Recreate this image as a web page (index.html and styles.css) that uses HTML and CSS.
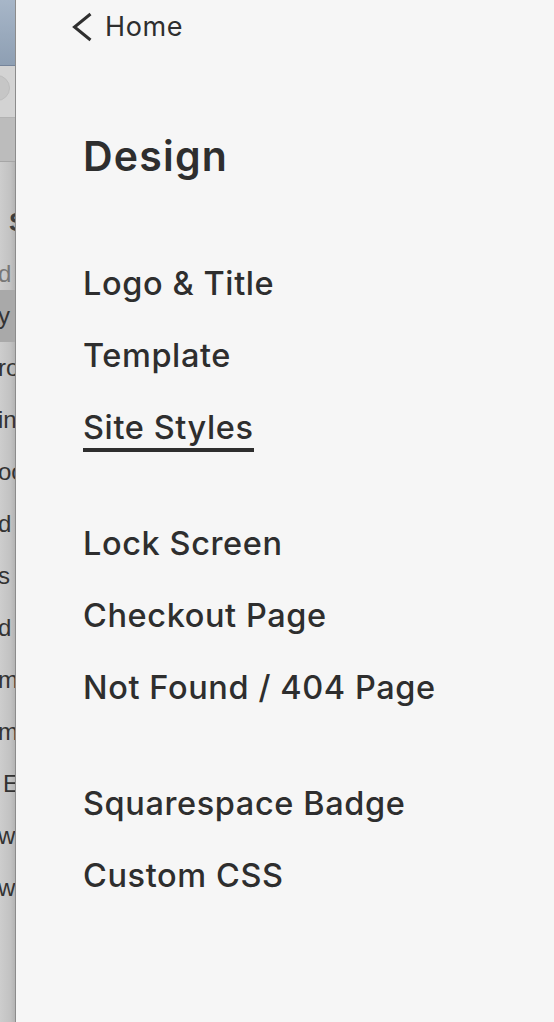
FILE: index.html
```html
<!DOCTYPE html>
<html lang="en">
<head>
<meta charset="utf-8">
<title>Design</title>
<link rel="stylesheet" href="styles.css">
</head>
<body>
<div class="app">
  <aside class="backdrop" aria-hidden="true">
    <div class="titlebar"></div>
    <div class="toolbar"><span class="dot"></span></div>
    <div class="tabs"></div>
    <ul class="bg-list">
      <li class="bg-head"><span class="frag f-s">S</span></li>
      <li class="bg-label"><span class="frag">d</span></li>
      <li class="bg-sel"><span class="frag">y</span></li>
      <li><span class="frag">ro</span></li>
      <li><span class="frag">in</span></li>
      <li><span class="frag">oo</span></li>
      <li><span class="frag">d</span></li>
      <li><span class="frag">s</span></li>
      <li><span class="frag">d</span></li>
      <li><span class="frag">m</span></li>
      <li><span class="frag">m</span></li>
      <li><span class="frag f-e">E</span></li>
      <li><span class="frag">w</span></li>
      <li><span class="frag">w</span></li>
    </ul>
  </aside>
  <main class="panel">
    <a class="back" href="#">
      <svg class="chev" width="20" height="30" viewBox="0 0 20 30"><polyline points="18.5,2 2.5,15 18.5,28" fill="none" stroke="#2f2f2f" stroke-width="3"/></svg>
      <span>Home</span>
    </a>
    <h1 class="title">Design</h1>
    <ul class="group">
      <li class="item">Logo &amp; Title</li>
      <li class="item">Template</li>
      <li class="item"><span class="active">Site Styles</span></li>
    </ul>
    <ul class="group">
      <li class="item">Lock Screen</li>
      <li class="item">Checkout Page</li>
      <li class="item">Not Found / 404 Page</li>
    </ul>
    <ul class="group">
      <li class="item">Squarespace Badge</li>
      <li class="item">Custom CSS</li>
    </ul>
  </main>
</div>
</body>
</html>
```

FILE: styles.css
```css
* { box-sizing: border-box; }
html, body { margin: 0; padding: 0; }
body {
  width: 554px;
  height: 1022px;
  overflow: hidden;
  background: #f6f6f6;
  font-family: Inter, "Noto Sans", sans-serif;
  color: #2e2e2e;
}
.app {
  display: flex;
  height: 1022px;
}
.backdrop {
  width: 16px;
  flex: none;
  display: flex;
  flex-direction: column;
  overflow: hidden;
  border-right: 1px solid #8c8c8c;
  background: linear-gradient(to right, #cdcdcd, #c2c2c2 70%, #b4b4b4);
}
.titlebar {
  height: 66px;
  flex: none;
  background: linear-gradient(#a7b6c8, #8e9fb3);
  border-bottom: 1px solid #75849a;
}
.toolbar {
  height: 52px;
  flex: none;
  background: #d3d3d3;
  border-bottom: 1px solid #b3b3b3;
  position: relative;
}
.dot {
  position: absolute;
  left: -16px;
  top: 9px;
  width: 26px;
  height: 26px;
  border-radius: 50%;
  background: #c6c6c6;
  border: 1px solid #bdbdbd;
}
.tabs {
  height: 44px;
  flex: none;
  background: #bcbcbc;
  border-bottom: 1px solid #a6a6a6;
}
.bg-list {
  list-style: none;
  margin: 0;
  padding: 34px 0 0;
  font-family: "Liberation Sans", Arial, sans-serif;
  font-size: 24px;
  color: #333;
}
.bg-list li {
  height: 52px;
  line-height: 52px;
  white-space: nowrap;
}
.bg-list .bg-head {
  font-weight: bold;
  font-size: 26px;
  color: #3d3d3d;
}
.bg-list .bg-label {
  height: 42px;
  color: #777;
}
.bg-list .bg-sel {
  background: #a9a9a9;
}
.frag {
  display: inline-block;
  margin-left: -2px;
}
.f-s { margin-left: 9px; }
.f-e { margin-left: 3px; }

.panel {
  flex: 1;
  background: #f6f6f6;
  padding: 12px 0 0 56px;
}
.back {
  display: flex;
  align-items: center;
  gap: 13px;
  color: #2e2e2e;
  text-decoration: none;
  font-size: 27px;
  line-height: 28px;
  font-weight: 400;
  letter-spacing: 0.6px;
}
.chev { display: block; }
.title {
  margin: 90px 0 0 11px;
  font-size: 41px;
  line-height: 48px;
  font-weight: 600;
  letter-spacing: 1.2px;
}
.group {
  list-style: none;
  margin: 68px 0 0 11px;
  padding: 0;
}
.group + .group { margin-top: 44px; }
.item {
  font-size: 32.5px;
  line-height: 72px;
  font-weight: 500;
  letter-spacing: 0.6px;
  white-space: nowrap;
}
.active {
  display: inline-block;
  line-height: 40px;
  border-bottom: 4px solid #2e2e2e;
}
```
